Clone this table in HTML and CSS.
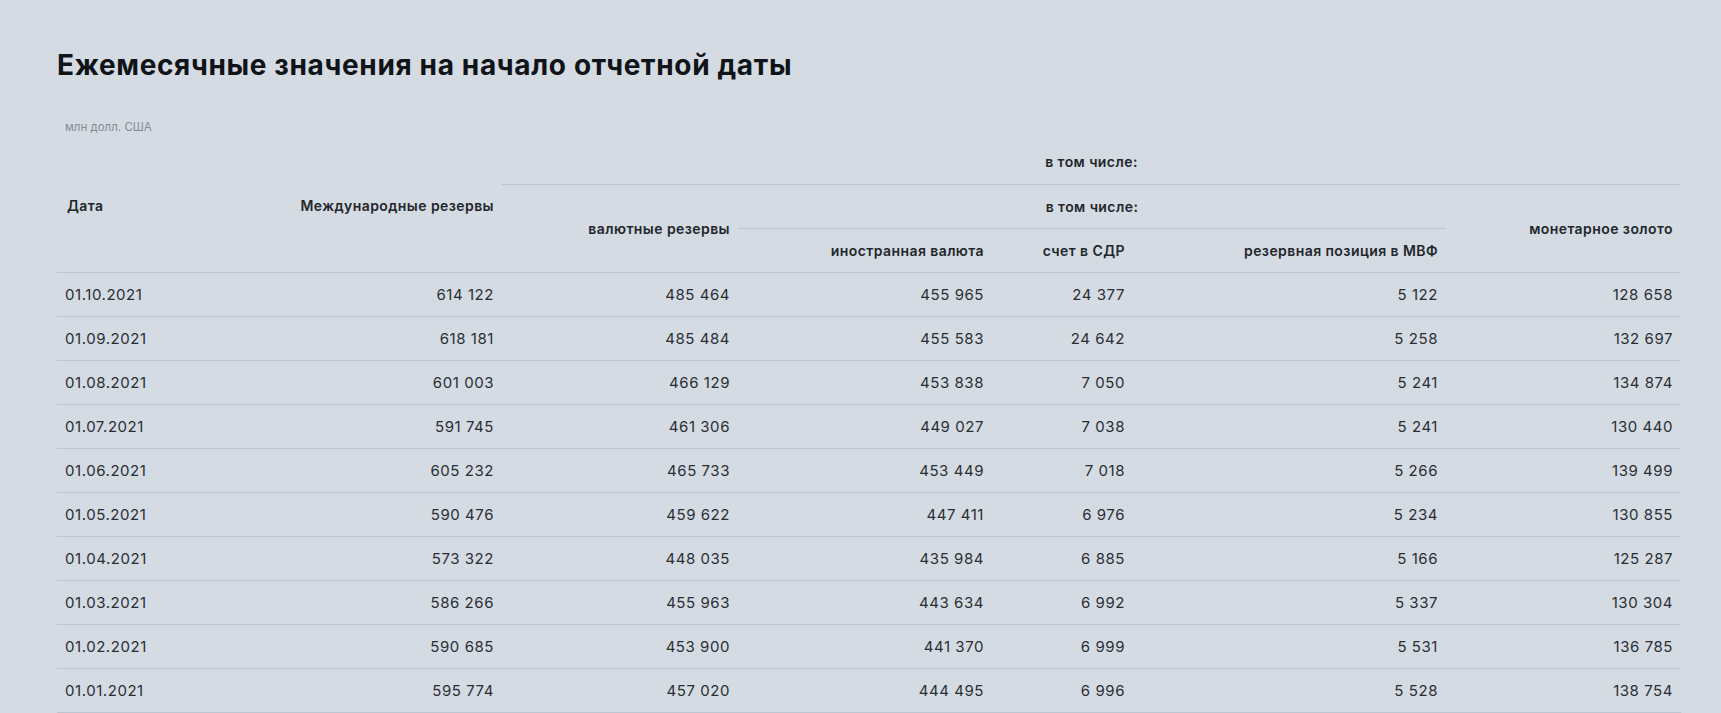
FILE: index.html
```html
<!DOCTYPE html>
<html lang="ru">
<head>
<meta charset="utf-8">
<title>Ежемесячные значения на начало отчетной даты</title>
<link rel="stylesheet" href="styles.css">
</head>
<body>
<main class="page">
  <h1 class="title">Ежемесячные значения на начало отчетной даты</h1>
  <p class="unit">млн долл. США</p>
  <table class="data">
    <colgroup>
      <col class="c-date"><col class="c-intl"><col class="c-cur"><col class="c-fx"><col class="c-sdr"><col class="c-imf"><col class="c-gold">
    </colgroup>
    <thead>
      <tr>
        <th rowspan="3" class="left head-date">Дата</th>
        <th rowspan="3">Международные резервы</th>
        <th colspan="5" class="center">в том числе:</th>
      </tr>
      <tr>
        <th rowspan="2">валютные резервы</th>
        <th colspan="3" class="center">в том числе:</th>
        <th rowspan="2">монетарное золото</th>
      </tr>
      <tr>
        <th>иностранная валюта</th>
        <th>счет в СДР</th>
        <th>резервная позиция в МВФ</th>
      </tr>
    </thead>
    <tbody>
      <tr><td class="left">01.10.2021</td><td>614 122</td><td>485 464</td><td>455 965</td><td>24 377</td><td>5 122</td><td>128 658</td></tr>
      <tr><td class="left">01.09.2021</td><td>618 181</td><td>485 484</td><td>455 583</td><td>24 642</td><td>5 258</td><td>132 697</td></tr>
      <tr><td class="left">01.08.2021</td><td>601 003</td><td>466 129</td><td>453 838</td><td>7 050</td><td>5 241</td><td>134 874</td></tr>
      <tr><td class="left">01.07.2021</td><td>591 745</td><td>461 306</td><td>449 027</td><td>7 038</td><td>5 241</td><td>130 440</td></tr>
      <tr><td class="left">01.06.2021</td><td>605 232</td><td>465 733</td><td>453 449</td><td>7 018</td><td>5 266</td><td>139 499</td></tr>
      <tr><td class="left">01.05.2021</td><td>590 476</td><td>459 622</td><td>447 411</td><td>6 976</td><td>5 234</td><td>130 855</td></tr>
      <tr><td class="left">01.04.2021</td><td>573 322</td><td>448 035</td><td>435 984</td><td>6 885</td><td>5 166</td><td>125 287</td></tr>
      <tr><td class="left">01.03.2021</td><td>586 266</td><td>455 963</td><td>443 634</td><td>6 992</td><td>5 337</td><td>130 304</td></tr>
      <tr><td class="left">01.02.2021</td><td>590 685</td><td>453 900</td><td>441 370</td><td>6 999</td><td>5 531</td><td>136 785</td></tr>
      <tr><td class="left">01.01.2021</td><td>595 774</td><td>457 020</td><td>444 495</td><td>6 996</td><td>5 528</td><td>138 754</td></tr>
    </tbody>
  </table>
</main>
</body>
</html>
```
FILE: styles.css
```css
html, body {
  margin: 0;
  padding: 0;
  background: #d4dbe3;
}
body {
  font-family: Inter, "Noto Sans", sans-serif;
  color: #23272c;
}
.page {
  padding: 48px 0 0 57px;
}
.title {
  margin: 0;
  font-size: 28px;
  font-weight: 700;
  line-height: 34px;
  color: #101317;
  letter-spacing: 0.65px;
}
.unit {
  margin: 38px 0 0 8px;
  font-size: 11.5px;
  line-height: 14px;
  color: #858b94;
}
.data {
  margin-top: 6px;
  width: 1624px;
  table-layout: fixed;
  border-collapse: collapse;
  font-size: 15px;
}
.c-date { width: 200px; }
.c-intl { width: 245px; }
.c-cur { width: 236px; }
.c-fx { width: 254px; }
.c-sdr { width: 141px; }
.c-imf { width: 313px; }
.c-gold { width: 235px; }
.data tr {
  height: 44px;
}
.data th, .data td {
  padding: 0 8px;
  text-align: right;
  vertical-align: middle;
  white-space: nowrap;
  border-bottom: 1px solid #bcc5cf;
}
.data th {
  font-size: 14px;
  font-weight: 600;
  letter-spacing: 0.42px;
  color: #23272c;
}
.data td {
  font-weight: 400;
  letter-spacing: 0.55px;
  color: #2a2e33;
}
.data .left { text-align: left; }
.data .center { text-align: center; }
.data .head-date { padding-left: 10px; }
.data thead tr:first-child th[rowspan] { border-bottom: 1px solid #bcc5cf; }
```
